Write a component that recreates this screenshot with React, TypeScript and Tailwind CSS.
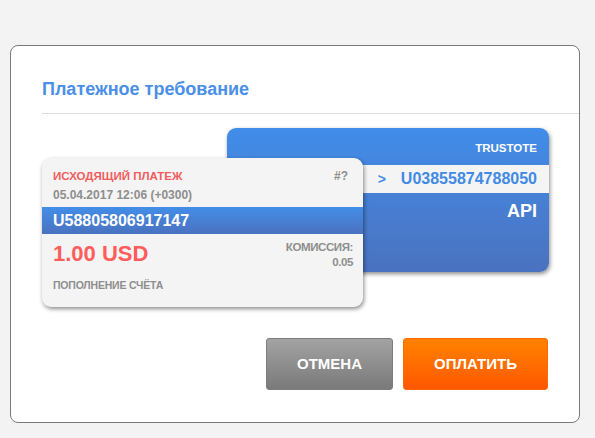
const font = { fontFamily: '"Liberation Sans", Arial, sans-serif' };

function BackCard() {
  return (
    <div className="ml-[185px] h-[144px] w-[322px] overflow-hidden rounded-[9px] bg-gradient-to-b from-[#418de9] to-[#4a72bf] shadow-[1px_2px_4px_rgba(0,0,0,0.45)]">
      <div className="px-[12px] pt-[13px] pb-[10px] text-right text-[11.5px] font-bold leading-[14px] text-white">
        TRUSTOTE
      </div>
      <div className="flex h-[28px] items-center justify-end bg-[#f4f4f4] px-[12px] text-[16px] font-bold text-[#418ae6]">
        <span className="mr-[15px] text-[14px]">&gt;</span>
        <span>U03855874788050</span>
      </div>
      <div className="mt-[7px] px-[12px] text-right text-[18px] font-bold leading-[22px] text-white">
        API
      </div>
    </div>
  );
}

function FrontCard() {
  return (
    <div className="relative z-10 mt-[-114px] h-[149px] w-[321px] overflow-hidden rounded-[9px] bg-[#f4f4f4] shadow-[1px_2px_4px_rgba(0,0,0,0.45)]">
      <div className="flex items-start justify-between pt-[11px] pr-[15px] pl-[11px]">
        <span className="text-[11.5px] font-bold leading-[14px] text-[#f25c5c]">
          ИСХОДЯЩИЙ ПЛАТЕЖ
        </span>
        <span className="text-[12px] font-bold leading-[14px] text-[#8e8e8e]">#?</span>
      </div>
      <div className="mt-[5px] pl-[11px] text-[12px] font-bold leading-[14px] text-[#8e8e8e]">
        05.04.2017 12:06 (+0300)
      </div>
      <div className="mt-[5px] flex h-[27px] items-center bg-gradient-to-b from-[#428ee8] to-[#4a72bf] pl-[11px] text-[16px] font-bold text-white">
        U58805806917147
      </div>
      <div className="mt-[6px] flex items-start justify-between pr-[10px] pl-[11px]">
        <span className="mt-[1px] text-[22px] font-bold leading-[26px] text-[#ff5c5c]">1.00 USD</span>
        <div className="text-right text-[11.5px] font-bold leading-[15px] tracking-[-0.4px] text-[#8e8e8e]">
          <div>КОМИССИЯ:</div>
          <div>0.05</div>
        </div>
      </div>
      <div className="mt-[9px] pl-[11px] text-[10.5px] font-bold leading-[12px] tracking-[-0.2px] text-[#8e8e8e]">
        ПОПОЛНЕНИЕ СЧЁТА
      </div>
    </div>
  );
}

export default function App() {
  return (
    <div className="h-[438px] w-[595px] bg-[#f3f3f3] pt-[45px] pl-[10px]" style={font}>
      <div className="h-[378px] w-[570px] rounded-[8px] border border-[#7a7a7a] bg-white pt-[32px]">
        <div className="pl-[31px]">
          <h1 className="text-[18px] font-bold leading-[22px] text-[#4a8fe7]">
            Платежное требование
          </h1>
          <div className="mt-[13px] h-px bg-[#dcdcdc]" />
        </div>
        <div className="mt-[14px] pl-[31px]">
          <BackCard />
          <FrontCard />
        </div>
        <div className="mt-[31px] flex justify-end gap-[10px] pr-[31px]">
          <button className="h-[52px] w-[127px] rounded-[3px] border border-[#7d7d7d] bg-gradient-to-b from-[#a3a3a3] to-[#7a7a7a] text-[15px] font-bold text-white">
            ОТМЕНА
          </button>
          <button className="h-[52px] w-[145px] rounded-[3px] border border-[#ff6a00] bg-gradient-to-b from-[#ff8200] to-[#ff5600] text-[15px] font-bold text-white">
            ОПЛАТИТЬ
          </button>
        </div>
      </div>
    </div>
  );
}
